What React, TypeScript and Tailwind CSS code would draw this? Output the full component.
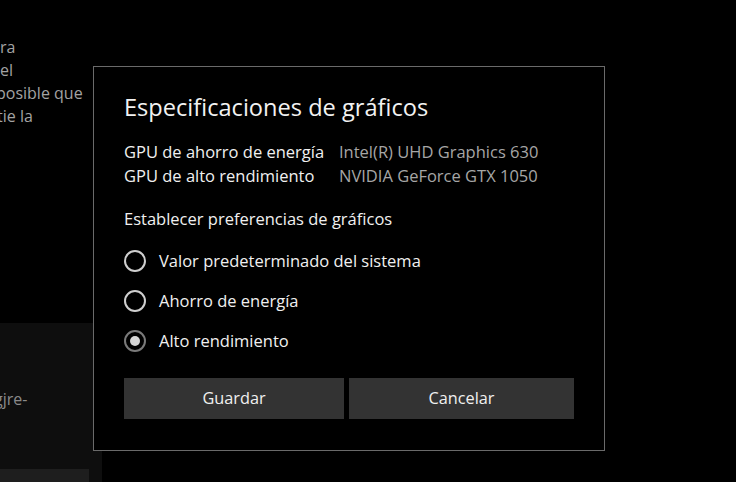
import { useState } from "react";

const options = [
    "Valor predeterminado del sistema",
    "Ahorro de energía",
    "Alto rendimiento",
];

function Radio({ checked }: { checked: boolean }) {
    return (
        <span
            className={
                "flex h-[22px] w-[22px] shrink-0 items-center justify-center rounded-full border-2 " +
                (checked ? "border-[#7a7a7a]" : "border-[#cfcfcf]")
            }
        >
            {checked && <span className="h-[10px] w-[10px] rounded-full bg-[#d6d6d6]" />}
        </span>
    );
}

export default function App() {
    const [pref, setPref] = useState(2);

    return (
        <div
            className="relative h-[482px] w-[736px] overflow-hidden bg-black"
            style={{ fontFamily: '"Open Sans", "Noto Sans", sans-serif' }}
        >
            {/* settings page behind the dialog */}
            <div className="flex w-[102px] flex-col">
                <div className="mt-[36px] text-[16px] leading-[23px] text-[#a3a3a3]">
                    <div>ra</div>
                    <div>el</div>
                    <div className="-ml-[4px]">posible que</div>
                    <div className="-ml-[3px]">tie la</div>
                </div>
                <div className="mt-[195px] flex h-[159px] flex-col bg-[#0e0e0e]">
                    <div className="mt-[65px] -ml-[6px] text-[16px] leading-[23px] text-[#8a8a8a]">gjre-</div>
                    <div className="mt-auto h-[13px] w-[89px] bg-[#1e1e1e]" />
                </div>
            </div>

            {/* dialog */}
            <div className="absolute left-[93px] top-[66px] flex h-[385px] w-[512px] flex-col border border-[#6a6a6a] bg-black pl-[30px] pr-[30px] text-white">
                <h1 className="mt-[24px] text-[23.6px] leading-[32px] text-[#f2f2f2]">
                    Especificaciones de gráficos
                </h1>

                <div className="mt-[17px] grid grid-cols-[215px_1fr] text-[16.5px] leading-[24px]">
                    <span className="text-[#f0f0f0]">GPU de ahorro de energía</span>
                    <span className="text-[#a6a6a6]">Intel(R) UHD Graphics 630</span>
                    <span className="text-[#f0f0f0]">GPU de alto rendimiento</span>
                    <span className="text-[#a6a6a6]">NVIDIA GeForce GTX 1050</span>
                </div>

                <div className="mt-[19px] text-[16.5px] leading-[24px] text-[#f0f0f0]">
                    Establecer preferencias de gráficos
                </div>

                <div className="mt-[18px] flex flex-col gap-[16px]">
                    {options.map((o, i) => (
                        <button
                            key={o}
                            onClick={() => setPref(i)}
                            className="flex h-[24px] items-center gap-[13px] text-left text-[16.5px] text-[#f0f0f0]"
                        >
                            <Radio checked={pref === i} />
                            <span>{o}</span>
                        </button>
                    ))}
                </div>

                <div className="mt-[25px] flex gap-[5px]">
                    <button className="h-[41px] w-[220px] bg-[#333333] text-[16.3px] text-[#f0f0f0]">Guardar</button>
                    <button className="h-[41px] w-[225px] bg-[#333333] text-[16.3px] text-[#f0f0f0]">Cancelar</button>
                </div>
            </div>
        </div>
    );
}
